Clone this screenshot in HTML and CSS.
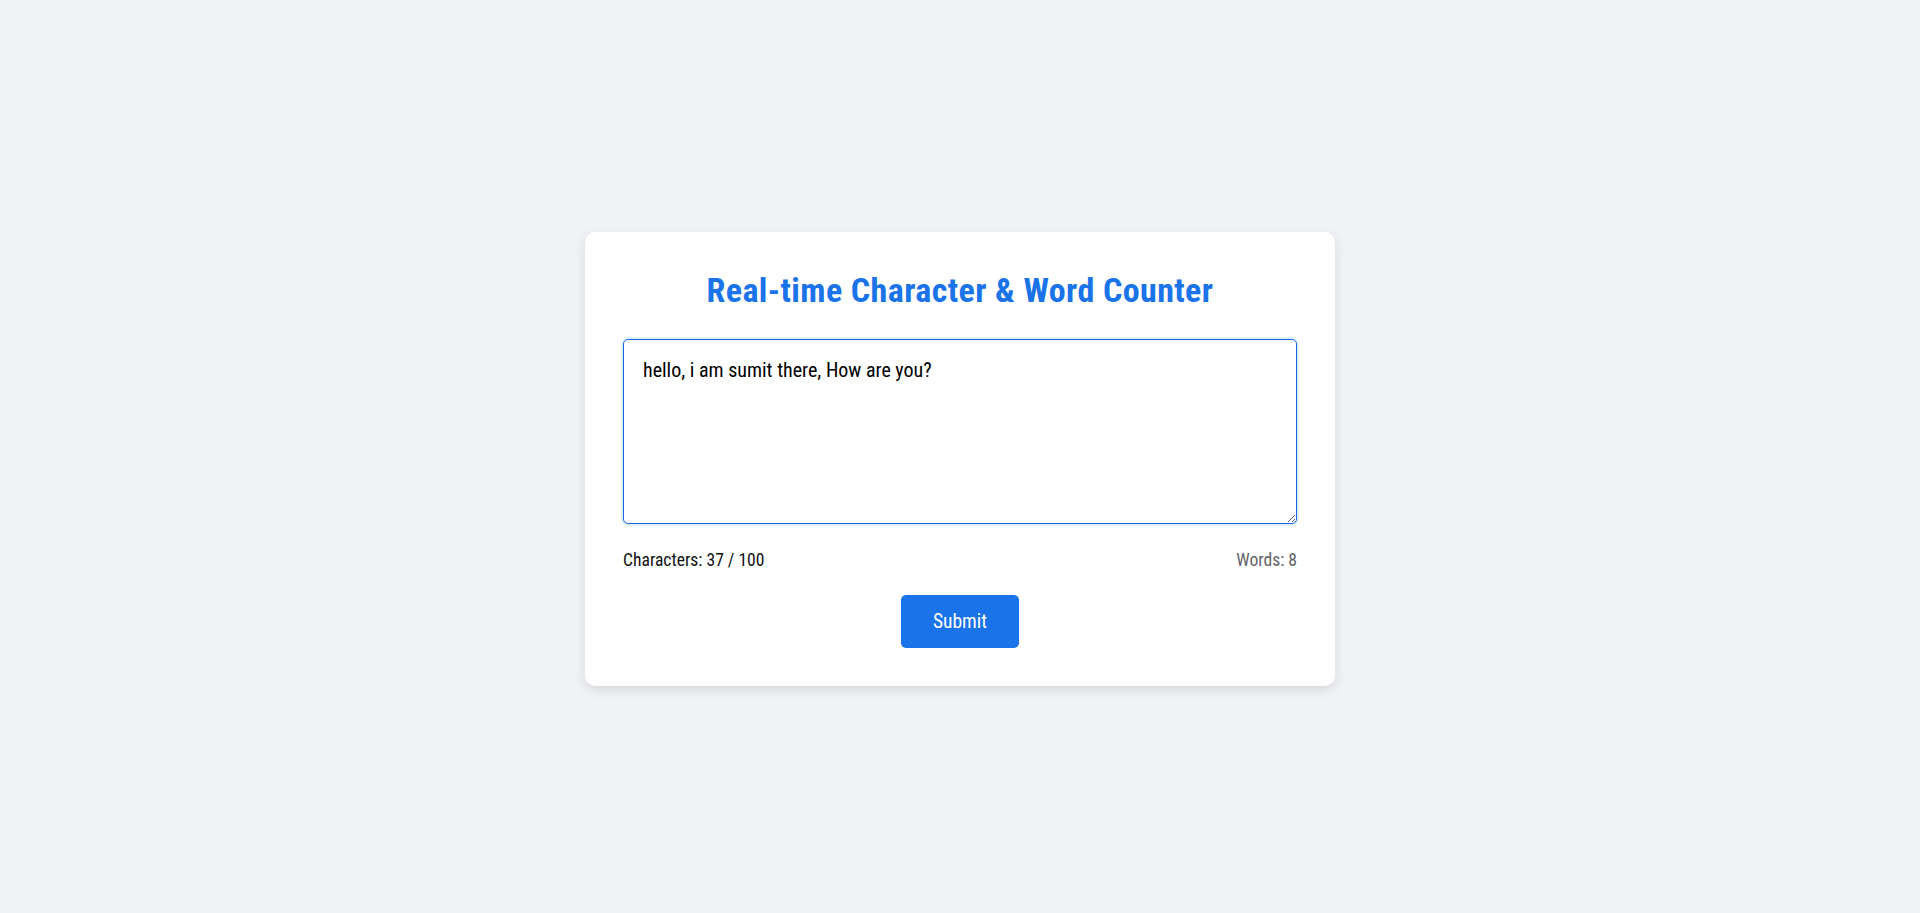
FILE: index.html
```html
<!DOCTYPE html>
<html lang="en">
<head>
<meta charset="utf-8">
<title>Real-time Character &amp; Word Counter</title>
<link rel="stylesheet" href="styles.css">
</head>
<body>
  <main class="card">
    <h1 class="title">Real-time Character &amp; Word Counter</h1>
    <textarea class="input is-focused" maxlength="100">hello, i am sumit there, How are you?</textarea>
    <div class="counters">
      <span class="chars">Characters: 37 / 100</span>
      <span class="words">Words: 8</span>
    </div>
    <div class="actions">
      <button class="submit" type="button">Submit</button>
    </div>
  </main>
</body>
</html>
```

FILE: styles.css
```css
* { box-sizing: border-box; }

html, body {
  height: 100%;
}

body {
  margin: 0;
  padding-top: 5px;
  background: #f0f2f5;
  font-family: "Roboto Condensed", Roboto, "Liberation Sans", sans-serif;
  display: flex;
  align-items: center;
  justify-content: center;
}

.card {
  width: 750px;
  background: #ffffff;
  border-radius: 10px;
  box-shadow: 0 4px 12px rgba(0, 0, 0, 0.1);
  padding: 38px;
  display: flex;
  flex-direction: column;
}

.title {
  margin: 0 0 28px;
  text-align: center;
  color: #1a73e8;
  font-size: 34px;
  letter-spacing: 0.4px;
  font-weight: 700;
  line-height: 1.2;
}

.input {
  display: block;
  width: 100%;
  height: 185px;
  padding: 15px 19px;
  border: 1px solid #ccc;
  border-radius: 5px;
  font-family: inherit;
  font-size: 20px;
  line-height: 1.5;
  color: #000;
  outline: none;
}

.input.is-focused {
  border-color: #1565d8;
  box-shadow: 0 0 0 2px rgba(26, 115, 232, 0.12);
}

.counters {
  display: flex;
  justify-content: space-between;
  margin-top: 26px;
  font-size: 17.6px;
  line-height: normal;
}

.chars { color: #111; }
.words { color: #5f6368; }

.actions {
  display: flex;
  justify-content: center;
  margin-top: 25px;
}

.submit {
  width: 118px;
  height: 53px;
  border: none;
  border-radius: 5px;
  background: #1a73e8;
  color: #fff;
  font-family: inherit;
  font-size: 19.5px;
  font-weight: 400;
  cursor: pointer;
}
```
